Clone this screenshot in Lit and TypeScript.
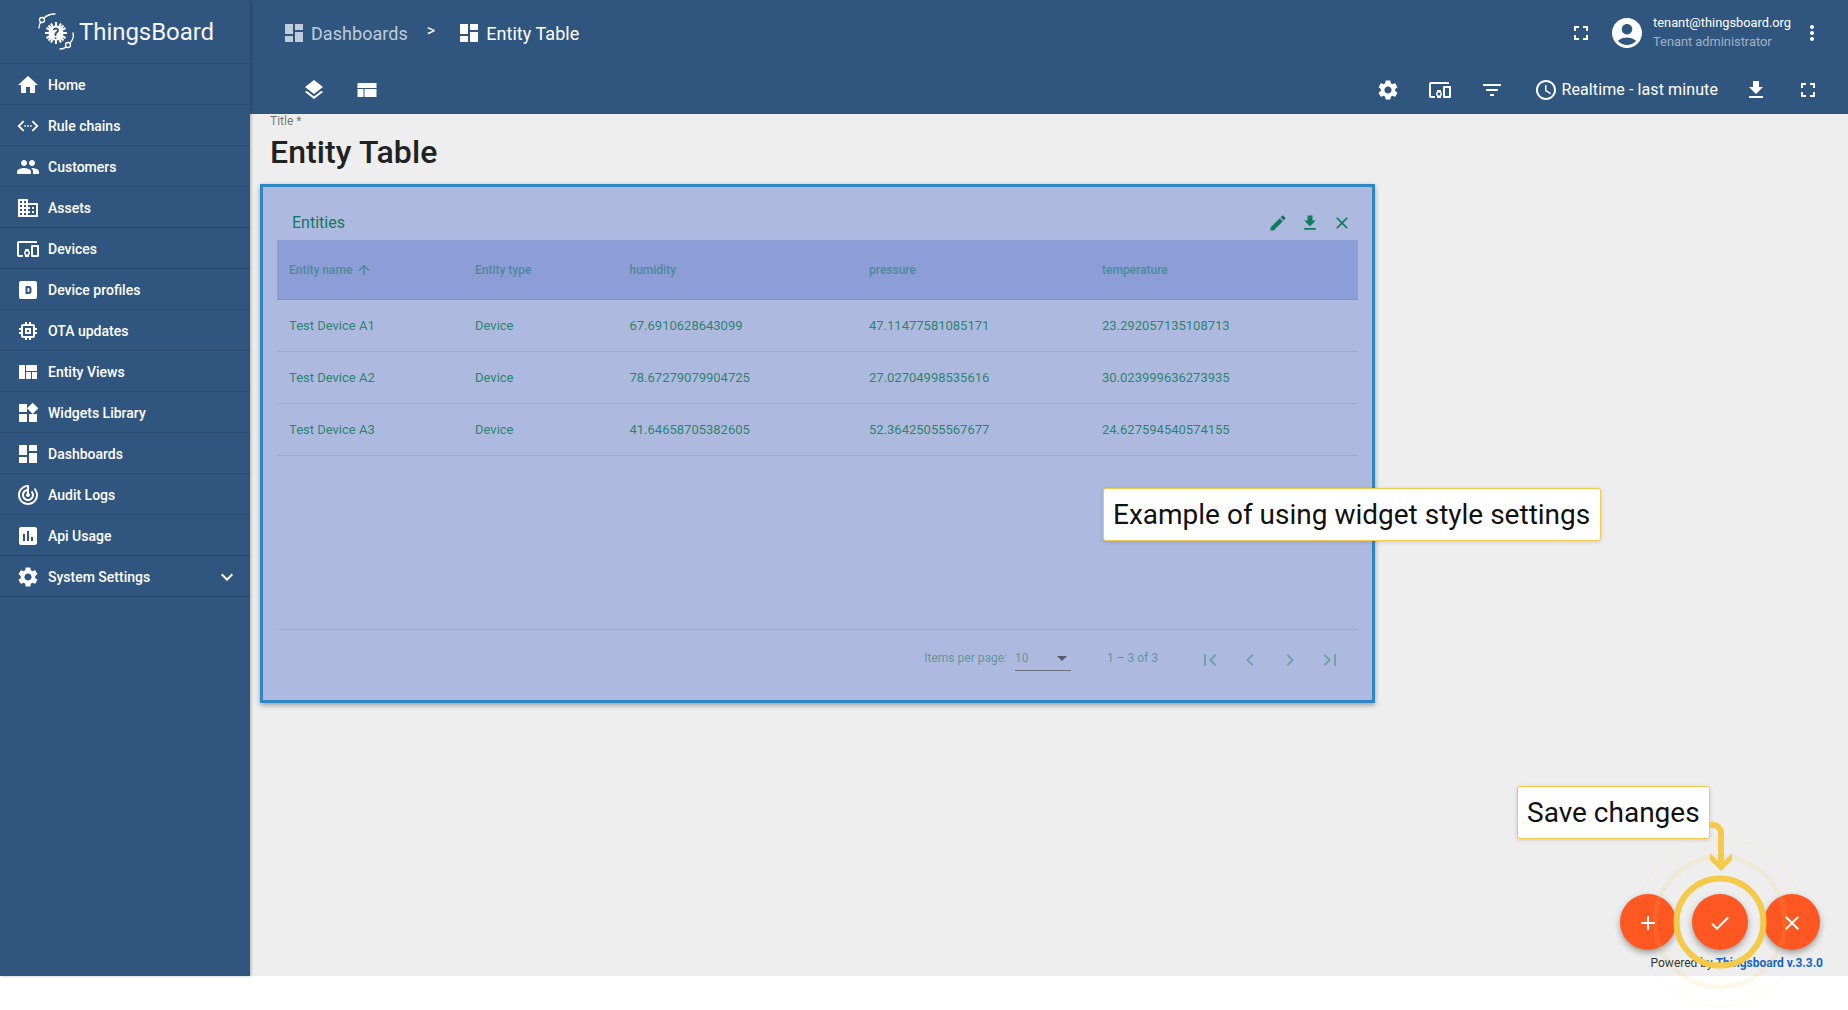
import { LitElement, html, css, svg } from "lit";
import { customElement } from "lit/decorators.js";

const P: Record<string, string> = {
  home: "M10 20v-6h4v6h5v-8h3L12 3 2 12h3v8z",
  rule: "M7 6.500 1.500 12 7 17.500l1.300-1.300L4.100 12l4.200-4.200zM17 6.500l-1.300 1.300 4.200 4.200-4.200 4.200 1.300 1.300 5.500-5.500zM8.300 11.200h1.600v1.600H8.300zM11.200 11.200h1.600v1.600h-1.600zM14.100 11.200h1.600v1.600h-1.600z",
  people: "M16 11c1.660 0 2.990-1.340 2.990-3S17.660 5 16 5s-3 1.340-3 3 1.340 3 3 3zm-8 0c1.660 0 2.990-1.340 2.990-3S9.660 5 8 5 5 6.340 5 8s1.340 3 3 3zm0 2c-2.330 0-7 1.170-7 3.500V19h14v-2.500C15 14.170 10.330 13 8 13zm8 0c-.29 0-.62.02-.97.05 1.160.84 1.970 1.970 1.970 3.450V19h6v-2.500c0-2.330-4.670-3.500-7-3.500z",
  domain: "M12 7V3H2v18h20V7H12zM6 19H4v-2h2v2zm0-4H4v-2h2v2zm0-4H4V9h2v2zm0-4H4V5h2v2zm4 12H8v-2h2v2zm0-4H8v-2h2v2zm0-4H8V9h2v2zm0-4H8V5h2v2zm10 12h-8v-2h2v-2h-2v-2h2v-2h-2V9h8v10zm-2-8h-2v2h2v-2zm0 4h-2v2h2v-2z",
  devices: "M3 6h18V4H3c-1.100 0-2 .9-2 2v12c0 1.100.9 2 2 2h4v-2H3V6zm10 6H9v1.780c-.61.55-1 1.330-1 2.220s.39 1.670 1 2.220V20h4v-1.780c.61-.55 1-1.340 1-2.220s-.39-1.670-1-2.220V12zm-2 5.500c-.83 0-1.500-.67-1.500-1.500s.67-1.500 1.500-1.500 1.500.67 1.500 1.500-.67 1.500-1.500 1.500zM22 8h-6c-.5 0-1 .5-1 1v10c0 .5.5 1 1 1h6c.5 0 1-.5 1-1V9c0-.5-.5-1-1-1zm-1 10h-4v-8h4v8z",
  profile: "M5 3h14a2 2 0 0 1 2 2v14a2 2 0 0 1-2 2H5a2 2 0 0 1-2-2V5a2 2 0 0 1 2-2zm4.500 5v8h3.500c1.400 0 2.500-1.100 2.500-2.500v-3c0-1.400-1.100-2.500-2.500-2.500H9.500zm2 2h1c.4 0 .9.300.9.900v2.200c0 .6-.5.900-.9.900h-1v-4z",
  memory: "M15 9H9v6h6V9zm-2 4h-2v-2h2v2zm8-2V9h-2V7c0-1.100-.9-2-2-2h-2V3h-2v2h-2V3H9v2H7c-1.100 0-2 .9-2 2v2H3v2h2v2H3v2h2v2c0 1.100.9 2 2 2h2v2h2v-2h2v2h2v-2h2c1.100 0 2-.9 2-2v-2h2v-2h-2v-2h2zm-4 6H7V7h10v10z",
  views: "M3 5v14h6V5H3zm7 0v6h11V5H10zm0 7v7h5v-7h-5zm6 0v7h5v-7h-5z",
  widgets: "M13 13v8h8v-8h-8zM3 21h8v-8H3v8zM3 3v8h8V3H3zm13.660-1.310L11 7.340 16.660 13l5.660-5.660-5.660-5.650z",
  dash: "M3 13h8V3H3v10zm0 8h8v-6H3v6zm10 0h8V11h-8v10zm0-18v6h8V3h-8z",
  audit: "M19.070 4.930l-1.410 1.410C19.100 7.790 20 9.790 20 12c0 4.420-3.580 8-8 8s-8-3.580-8-8c0-4.080 3.050-7.440 7-7.930v2.020C8.160 6.570 6 9.030 6 12c0 3.310 2.690 6 6 6s6-2.690 6-6c0-1.660-.67-3.160-1.760-4.240l-1.410 1.410C15.550 9.900 16 10.890 16 12c0 2.210-1.790 4-4 4s-4-1.790-4-4c0-1.860 1.280-3.410 3-3.860v2.140c-.6.35-1 .98-1 1.720 0 1.100.9 2 2 2s2-.9 2-2c0-.74-.4-1.380-1-1.720V2h-1C6.480 2 2 6.480 2 12s4.480 10 10 10 10-4.480 10-10c0-2.760-1.120-5.260-2.930-7.070z",
  usage: "M19 3H5c-1.100 0-2 .9-2 2v14c0 1.100.9 2 2 2h14c1.100 0 2-.9 2-2V5c0-1.100-.9-2-2-2zM9 17H7v-7h2v7zm4 0h-2V7h2v10zm4 0h-2v-4h2v4z",
  gear: "M19.140 12.940c.04-.3.06-.61.06-.94 0-.32-.02-.64-.07-.94l2.030-1.580a.49.49 0 0 0 .12-.61l-1.920-3.320a.488.488 0 0 0-.59-.22l-2.390.96c-.5-.38-1.030-.7-1.620-.94l-.36-2.540a.484.484 0 0 0-.48-.41h-3.840c-.24 0-.43.170-.47.410l-.36 2.540c-.59.240-1.130.570-1.620.940l-2.390-.96c-.22-.08-.47 0-.59.220L2.740 8.870c-.12.210-.08.470.12.610l2.030 1.580c-.05.3-.09.630-.09.940s.02.640.07.940l-2.030 1.580a.49.49 0 0 0-.12.610l1.920 3.320c.12.220.37.290.59.220l2.390-.96c.5.380 1.030.7 1.620.94l.36 2.540c.05.240.24.410.48.410h3.840c.24 0 .44-.170.47-.410l.36-2.540c.59-.240 1.130-.560 1.620-.940l2.390.96c.22.080.47 0 .59-.220l1.920-3.320c.12-.220.07-.470-.12-.610l-2.010-1.580zM12 15.600c-1.980 0-3.600-1.620-3.600-3.600s1.620-3.600 3.600-3.600 3.600 1.620 3.600 3.600-1.620 3.600-3.600 3.600z",
  chev: "M16.590 8.590 12 13.170 7.410 8.590 6 10l6 6 6-6z",
  layers: "M11.990 18.540l-7.370-5.730L3 14.070l9 7 9-7-1.630-1.270-7.380 5.740zM12 16l7.360-5.730L21 9l-9-7-9 7 1.630 1.270L12 16z",
  layout: "M2.500 5v5h19V5h-19zm0 6v8h6v-8h-6zm7 0v8h12v-8h-12z",
  full: "M7 14H5v5h5v-2H7v-3zm-2-4h2V7h3V5H5v5zm12 7h-3v2h5v-5h-2v3zM14 5v2h3v3h2V5h-5z",
  account: "M12 2C6.480 2 2 6.480 2 12s4.480 10 10 10 10-4.480 10-10S17.520 2 12 2zm0 4c1.930 0 3.500 1.570 3.500 3.500S13.930 13 12 13s-3.500-1.570-3.500-3.500S10.070 6 12 6zm0 14c-2.030 0-4.430-.82-6.140-2.880a9.947 9.947 0 0 1 12.280 0C16.430 19.180 14.030 20 12 20z",
  more: "M12 8c1.100 0 2-.9 2-2s-.9-2-2-2-2 .9-2 2 .9 2 2 2zm0 2c-1.100 0-2 .9-2 2s.9 2 2 2 2-.9 2-2-.9-2-2-2zm0 6c-1.100 0-2 .9-2 2s.9 2 2 2 2-.9 2-2-.9-2-2-2z",
  filter: "M3 6h18v2H3zM6 11h12v2H6zM10 16h4v2h-4z",
  clock: "M11.990 2C6.470 2 2 6.480 2 12s4.470 10 9.990 10C17.520 22 22 17.520 22 12S17.520 2 11.990 2zM12 20c-4.420 0-8-3.580-8-8s3.580-8 8-8 8 3.580 8 8-3.580 8-8 8zm.5-13H11v6l5.250 3.150.75-1.230-4.500-2.670V7z",
  download: "M19 9h-4V3H9v6H5l7 7 7-7zM5 18v2h14v-2H5z",
  edit: "M3 17.250V21h3.750L17.810 9.940l-3.750-3.750L3 17.250zM20.710 7.040a.996.996 0 0 0 0-1.410l-2.340-2.340a.996.996 0 0 0-1.410 0l-1.830 1.830 3.750 3.750 1.830-1.830z",
  close: "M19 6.410 17.590 5 12 10.590 6.410 5 5 6.410 10.590 12 5 17.590 6.410 19 12 13.410 17.590 19 19 17.590 13.410 12z",
  add: "M19 13h-6v6h-2v-6H5v-2h6V5h2v6h6v2z",
  check: "M9 16.170 4.830 12l-1.420 1.410L9 19 21 7l-1.410-1.410z",
  first: "M18.410 16.590 13.820 12l4.590-4.590L17 6l-6 6 6 6zM6 6h2v12H6z",
  prev: "M15.410 7.410 14 6l-6 6 6 6 1.410-1.410L10.830 12z",
  next: "M10 6 8.590 7.410 13.170 12l-4.580 4.590L10 18l6-6z",
  last: "M5.590 7.410 10.180 12l-4.590 4.590L7 18l6-6-6-6zM16 6h2v12h-2z",
  up: "M4 12l1.410 1.410L11 7.830V20h2V7.830l5.580 5.590L20 12l-8-8z",
};

const icon = (n: string, s = 24) =>
  html`<svg class="ic" width=${s} height=${s} viewBox="0 0 24 24" fill="currentColor" aria-hidden="true">${svg`<path d=${P[n]}></path>`}</svg>`;

const MENU = [
  ["home", "Home"], ["rule", "Rule chains"], ["people", "Customers"], ["domain", "Assets"],
  ["devices", "Devices"], ["profile", "Device profiles"], ["memory", "OTA updates"], ["views", "Entity Views"],
  ["widgets", "Widgets Library"], ["dash", "Dashboards"], ["audit", "Audit Logs"], ["usage", "Api Usage"], ["gear", "System Settings"],
];
const ROWS = [
  ["Test Device A1", "Device", "67.6910628643099", "47.11477581085171", "23.292057135108713"],
  ["Test Device A2", "Device", "78.67279079904725", "27.02704998535616", "30.023999636273935"],
  ["Test Device A3", "Device", "41.64658705382605", "52.36425055567677", "24.627594540574155"],
];

@customElement("app-root")
export class AppRoot extends LitElement {
  static styles = css`
    :host { display: block; height: 1010px; background: #fff; font-family: Roboto, "Liberation Sans", sans-serif; overflow: hidden; position: relative; }
    .ic { display: block; flex: none; }
    .shell { display: flex; height: 976px; }
    .side { width: 250px; flex: none; background: #305680; color: #fff; box-shadow: 1px 0 3px rgba(0,0,0,.25); z-index: 2; }
    .logo { height: 64px; box-sizing: border-box; display: flex; align-items: center; padding-left: 36px; gap: 3px; border-bottom: 1px solid #2b4d73; font-size: 24px; color: #f3f5f8; }
    .logo span { letter-spacing: -.05px; }
    .item { height: 41px; box-sizing: border-box; display: flex; align-items: center; padding: 1px 0 0 16px; gap: 8px; font-size: 14px; font-weight: 500; border-bottom: 1px solid #2b4d73; }
    .item span { flex: 1; }
    .item .chev { margin-right: 11px; }
    .main { flex: 1; min-width: 0; background: #eee; display: flex; flex-direction: column; }
    .top { height: 114px; flex: none; background: #305680; color: #fff; box-sizing: border-box; }
    .row1 { height: 66px; display: flex; align-items: center; padding: 0 24px 0 32px; }
    .crumb { display: flex; align-items: center; gap: 5px; font-size: 18px; letter-spacing: .05px; }
    .crumb.dim { color: rgba(255,255,255,.7); }
    .sep { font-size: 16px; margin: 0 22px 5px 19px; }
    .spacer { flex: 1; }
    .gap16 { width: 16px; } .gap28 { width: 28px; } .gap29 { width: 29px; } .gap30 { width: 30px; } .gap26 { width: 26px; } .gap9 { width: 9px; }
    .user { margin-left: 8px; padding-bottom: 2px; display: flex; flex-direction: column; gap: 3px; font-size: 12.8px; line-height: 16px; }
    .user small { font-size: 12.8px; color: rgba(255,255,255,.55); }
    .row2 { height: 48px; display: flex; align-items: center; padding: 0 28px 0 52px; }
    .time { display: flex; align-items: center; gap: 4px; font-size: 16px; letter-spacing: .1px; }
    .time span { padding-bottom: 2px; }
    .body { flex: 1; padding: 0 10px; position: relative; }
    .lab { font-size: 12px; color: rgba(0,0,0,.54); margin: 0 0 0 10px; line-height: 14px; }
    h1 { margin: 5px 0 0 10px; font-size: 32px; font-weight: 500; line-height: 38px; color: #212121; letter-spacing: .1px; }
    .card { margin-top: 13px; width: 1115px; height: 519px; box-sizing: border-box; background: #aeb9e0; border: 3px solid #2d87c3; box-shadow: 0 2px 5px rgba(0,0,0,.35); padding: 0 14px; display: flex; flex-direction: column; color: #0e7c5a; }
    .chead { height: 53px; box-sizing: border-box; flex: none; display: flex; align-items: flex-end; padding: 0 0 8px 15px; font-size: 16px; }
    .tools { margin: 0 0 -1px auto; display: flex; gap: 12px; padding-right: 6px; }
    .r { display: grid; grid-template-columns: 186px 154.500px 239.500px 233px 1fr; padding-left: 12px; align-items: center; font-size: 12px; }
    .r.h { height: 60px; background: #8c9dd8; border-bottom: 1px solid #8292cf; box-sizing: border-box; font-weight: 500; color: rgba(14,124,90,.54); }
    .r.d { height: 52px; box-sizing: border-box; border-bottom: 1px solid rgba(0,0,0,.08); font-size: 13px; color: rgba(14,124,90,.87); }
    .nm { display: flex; align-items: center; gap: 4px; }
    .fill { flex: 1; }
    .foot { height: 71px; box-sizing: border-box; flex: none; border-top: 1px solid #9badd2; display: flex; align-items: flex-start; color: rgba(14,124,90,.54); font-size: 12px; line-height: 14px; padding: 18px 16px 0 0; }
    .items { margin-top: 3px; }
    .sel { margin-left: 8px; width: 56px; height: 23px; box-sizing: border-box; border-bottom: 1px solid #6a6f80; display: flex; justify-content: space-between; padding: 3px 4px 0 0; }
    .caret { width: 0; height: 0; margin-top: 5px; border: 5px solid transparent; border-top-color: #555a70; border-bottom: 0; }
    .range { margin: 3px 40px 0 36px; }
    .pg { display: flex; gap: 16px; color: rgba(14,124,90,.38); }
    .callout { position: absolute; background: #fff; border: 1px solid #f5c94c; border-radius: 3px; box-shadow: 0 1px 4px rgba(0,0,0,.15); font-size: 28px; line-height: 51px; padding: 0 9px; color: #111; white-space: nowrap; z-index: 5; }
    .callout.wide { padding-right: 10px; }
    .fab { position: absolute; top: 894px; width: 56px; height: 56px; box-sizing: border-box; padding-top: 2px; border-radius: 50%; background: #ff5722; color: #fff; display: flex; align-items: center; justify-content: center; box-shadow: 0 3px 6px rgba(0,0,0,.35); }
    .powered { position: absolute; right: 25px; top: 955px; font-size: 12px; line-height: 16px; color: #333; }
    .powered b { color: #1565c0; font-weight: 700; }
    .over { position: absolute; left: 0; top: 0; pointer-events: none; z-index: 6; }
  `;

  render() {
    return html`
      <div class="shell">
        <nav class="side">
          <div class="logo">
            <svg width="40" height="40" viewBox="0 0 40 40" fill="none" stroke="#fff" stroke-width="1.300" aria-hidden="true">
              <path d="M3 16C3 13 4 11 5 10M8 6C11 3 15 2 19 2M37 21C38 25 37 28 34 31M30 35C28 37 25 37 24 37" stroke-linecap="round"/>
              <circle cx="6" cy="8" r="2.500"/><circle cx="32" cy="33" r="2.500"/>
              <path d="M20 10v22M9 21h22M12.500 13.500l15 15M27.500 13.500l-15 15M15 11.500l10 19M25 11.500l-10 19M10.500 16l19 10M29.500 16l-19 10" stroke-width="2"/>
              <circle cx="20" cy="21" r="7.500" fill="#fff" stroke="none"/>
              <path d="M17.500 18c1.500-2.500 5-1.500 4.500 1l-2.500 2.500v2.500M19.500 25.500v1.500" stroke="#305680" stroke-width="1.800"/>
            </svg>
            <span>ThingsBoard</span>
          </div>
          ${MENU.map(([i, t], k) => html`<div class="item">${icon(i)}<span>${t}</span>${k === 12 ? html`<div class="chev">${icon("chev")}</div>` : ""}</div>`)}
        </nav>
        <div class="main">
          <header class="top">
            <div class="row1">
              <div class="crumb dim">${icon("dash")}Dashboards</div>
              <div class="sep">&gt;</div>
              <div class="crumb">${icon("dash")}Entity Table</div>
              <div class="spacer"></div>
              ${icon("full")}
              <div class="gap16"></div>
              ${icon("account", 36)}
              <div class="user">tenant@thingsboard.org<small>Tenant administrator</small></div>
              <div class="gap9"></div>
              ${icon("more")}
            </div>
            <div class="row2">
              ${icon("layers")}
              <div class="gap29"></div>
              ${icon("layout")}
              <div class="spacer"></div>
              ${icon("gear")}<div class="gap28"></div>
              ${icon("devices")}<div class="gap28"></div>
              ${icon("filter")}<div class="gap30"></div>
              <div class="time">${icon("clock")}<span>Realtime - last minute</span></div>
              <div class="gap26"></div>
              ${icon("download")}<div class="gap28"></div>
              ${icon("full")}
            </div>
          </header>
          <div class="body">
            <div class="lab">Title *</div>
            <h1>Entity Table</h1>
            <section class="card">
              <div class="chead">Entities
                <div class="tools">${icon("edit", 20)}${icon("download", 20)}${icon("close", 20)}</div>
              </div>
              <div class="r h">
                <div class="nm">Entity name ${icon("up", 16)}</div><div>Entity type</div><div>humidity</div><div>pressure</div><div>temperature</div>
              </div>
              ${ROWS.map((r) => html`<div class="r d">${r.map((c) => html`<div>${c}</div>`)}</div>`)}
              <div class="fill"></div>
              <div class="foot">
                <div class="fill"></div>
                <div class="items">Items per page:</div>
                <div class="sel">10<div class="caret"></div></div>
                <div class="range">1 – 3 of 3</div>
                <div class="pg">${icon("first")}${icon("prev")}${icon("next")}${icon("last")}</div>
              </div>
            </section>
          </div>
        </div>
      </div>
      <div class="powered">Powered by <b>Thingsboard v.3.3.0</b></div>
      <div class="fab" style="left:1620px">${icon("add")}</div>
      <div class="fab" style="left:1692px">${icon("check")}</div>
      <div class="fab" style="left:1764px">${icon("close")}</div>
      <div class="callout wide" style="left:1103px;top:488px">Example of using widget style settings</div>
      <div class="callout" style="left:1517px;top:786px">Save changes</div>
      <svg class="over" width="1848" height="1010" fill="none" aria-hidden="true">
        <circle cx="1720" cy="922" r="43.500" stroke="#f5c94c" stroke-width="6"/>
        <circle cx="1720" cy="922" r="65" stroke="#f5c94c" stroke-width="5" opacity=".12"/>
        <circle cx="1720" cy="922" r="84" stroke="#f5c94c" stroke-width="1.500" opacity=".06"/>
        <path d="M1710 825h3a8 8 0 0 1 8 8v30" stroke="#f5c94c" stroke-width="6"/>
        <path d="M1710 853v7l11 11 11-11v-7l-11 11z" fill="#f5c94c"/>
      </svg>
    `;
  }
}
